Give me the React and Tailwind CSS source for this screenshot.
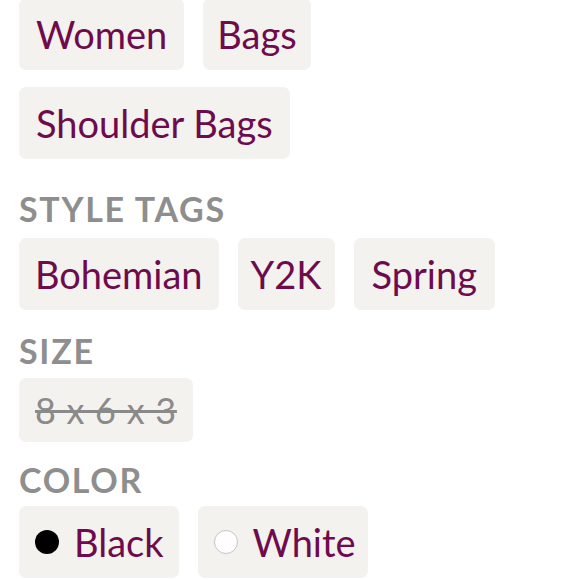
import React from 'react';

const Chip = ({ children, pad = 'px-[17px]' }) => (
  <div className={`flex h-[72px] items-center gap-[15px] rounded-[7px] bg-[#f4f2ee] text-[38px] leading-none text-[#6e0b4d] ${pad}`}>
    {children}
  </div>
);

const Label = ({ children, className = '' }) => (
  <h3 className={`text-[34px] font-bold uppercase leading-none tracking-[0.05em] text-[#8e8e8e] ${className}`}>
    {children}
  </h3>
);

export default function App() {
  return (
    <div className="min-h-screen overflow-hidden bg-white px-[19px] font-['Lato',sans-serif]">
      {/* Categories */}
      <div className="-mt-[2px] flex flex-wrap gap-x-[19px] gap-y-[17px]">
        <Chip>Women</Chip>
        <Chip pad="px-[14px]">Bags</Chip>
        <Chip>Shoulder Bags</Chip>
      </div>

      {/* Style tags */}
      <Label className="mt-[33px]">Style Tags</Label>
      <div className="mt-[12px] flex flex-wrap gap-x-[19px]">
        <Chip pad="px-[16px]">Bohemian</Chip>
        <Chip pad="px-[13px]">Y2K</Chip>
        <Chip pad="px-[18px]">Spring</Chip>
      </div>

      {/* Size */}
      <Label className="mt-[24px]">Size</Label>
      <div className="mt-[10px] flex">
        <div className="flex h-[64px] items-center rounded-[7px] bg-[#f4f2ee] px-[16px] text-[36px] leading-none tracking-[0.02em] text-[#8a8a8a] line-through">
          8 x 6 x 3
        </div>
      </div>

      {/* Color */}
      <Label className="mt-[21px]">Color</Label>
      <div className="mt-[9px] flex gap-x-[19px]">
        <Chip pad="pl-[16px] pr-[15px]">
          <span className="h-[24px] w-[24px] shrink-0 rounded-full bg-black" />
          Black
        </Chip>
        <Chip pad="pl-[16px] pr-[12px]">
          <span className="h-[24px] w-[24px] shrink-0 rounded-full border border-[#c4c4c4] bg-white" />
          White
        </Chip>
      </div>
    </div>
  );
}
